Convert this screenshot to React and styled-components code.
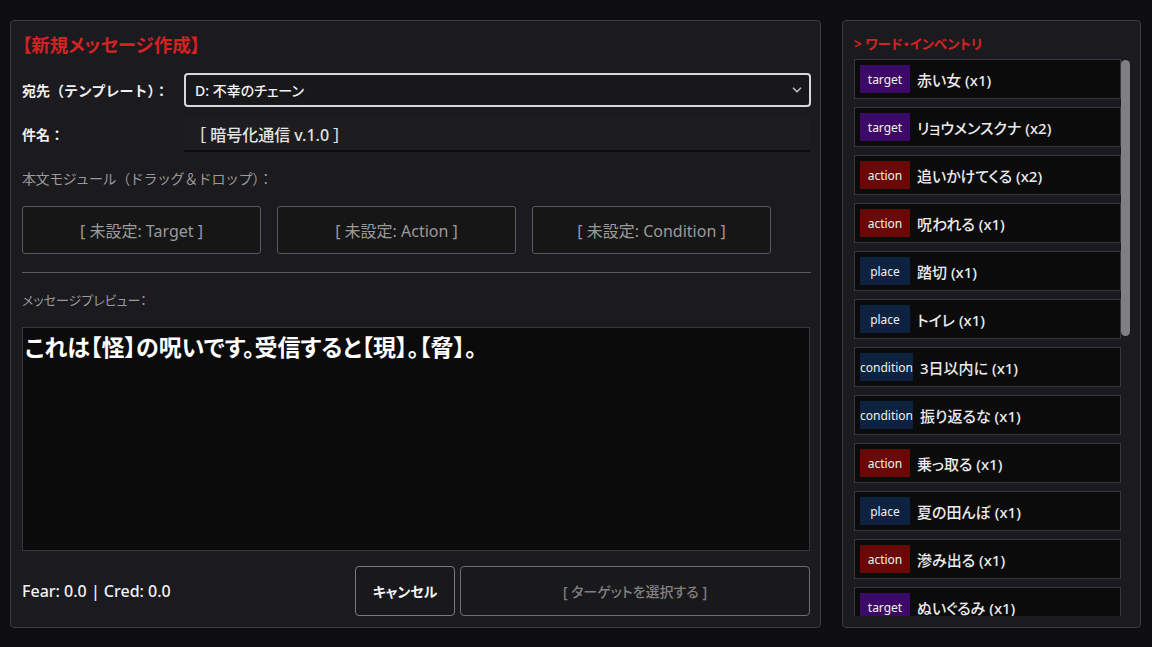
import React from "react";
import styled, { createGlobalStyle } from "styled-components";
import { ChevronDown } from "lucide-react";

const GlobalStyle = createGlobalStyle`
  html, body {
    margin: 0;
    padding: 0;
    background: #0e0e11;
    color: #e6e6e6;
    font-family: "Noto Sans", "Noto Sans CJK JP", sans-serif;
    font-feature-settings: "palt";
  }
  * { box-sizing: border-box; }
`;

const Screen = styled.div`
  display: flex;
  gap: 21px;
  height: 647px;
  padding: 20px 11px 19px 10px;
`;

const Panel = styled.div`
  background: #1b1a1f;
  border: 1px solid #3c3b40;
  border-radius: 4px;
  padding: 11px 9px 11px 11px;
  display: flex;
  flex-direction: column;
  min-width: 0;
`;

const Composer = styled(Panel)`
  flex: 1;
`;

const Inventory = styled(Panel)`
  width: 299px;
  flex-shrink: 0;
  padding-right: 10px;
`;

const Title = styled.h1`
  margin: 0;
  font-size: 18.5px;
  line-height: 26px;
  font-weight: 700;
  color: #d32222;
`;

const FieldRow = styled.div`
  display: flex;
  align-items: center;
  margin-top: ${(p) => p.$mt}px;
`;

const FieldLabel = styled.div`
  width: 162px;
  font-size: 14px;
  font-weight: 700;
  color: #f0f0f0;
  font-feature-settings: normal;
`;

const SelectBox = styled.div`
  flex: 1;
  height: 34px;
  border: 2px solid #d8d8d8;
  border-radius: 4px;
  background: #18181a;
  display: flex;
  align-items: center;
  justify-content: space-between;
  padding: 0 5px 0 9px;
  font-size: 14px;
  font-weight: 500;
  color: #f2f2f2;
`;

const SubjectBox = styled.div`
  flex: 1;
  height: 32px;
  margin-right: 1px;
  background: #1d1d20;
  box-shadow: 0 2px 0 #0c0c0e;
  display: flex;
  align-items: center;
  padding-left: 14px;
  font-size: 16px;
  font-weight: 500;
  color: #e4e4e4;
`;

const SectionLabel = styled.div`
  margin-top: ${(p) => p.$mt}px;
  font-size: ${(p) => p.$size}px;
  letter-spacing: ${(p) => (p.$plain ? "-0.4px" : "0")};
  font-feature-settings: ${(p) => (p.$plain ? "normal" : '"palt"')};
  color: #9a9a9a;
  line-height: 20px;
`;

const Slots = styled.div`
  display: flex;
  gap: 16px;
  margin-top: 17px;
`;

const Slot = styled.div`
  width: 239px;
  height: 48px;
  border: 1px solid #5a5a5e;
  border-radius: 3px;
  background: #161617;
  display: flex;
  align-items: center;
  justify-content: center;
  font-size: 16px;
  color: #9a9a9a;
`;

const Divider = styled.hr`
  border: none;
  border-top: 1px solid #5c5c60;
  margin: 18px 0 0 0;
`;

const Preview = styled.div`
  flex: 1;
  margin-top: 17px;
  margin-right: 1px;
  background: #0b0b0c;
  border: 1px solid #38383c;
  padding: 4px 1px 4px 2px;
  font-size: 23px;
  font-weight: 700;
  color: #ffffff;
  line-height: 30px;
`;

const Footer = styled.div`
  display: flex;
  align-items: center;
  margin-top: 15px;
  gap: 4px;
`;

const Stats = styled.div`
  flex: 1;
  font-size: 16px;
  font-weight: 500;
  color: #f2f2f2;
`;

const Button = styled.button`
  height: 50px;
  width: ${(p) => p.$w}px;
  margin-right: 1px;
  border: 1px solid ${(p) => (p.$muted ? "#6e6e72" : "#7a7a7e")};
  border-radius: 4px;
  background: #19191b;
  color: ${(p) => (p.$muted ? "#808080" : "#f4f4f4")};
  font-family: inherit;
  font-feature-settings: "palt";
  font-size: 14px;
  font-weight: ${(p) => (p.$muted ? 500 : 700)};
`;

const InvTitle = styled.div`
  font-size: 13.5px;
  font-weight: 700;
  color: #d32222;
  line-height: 24px;
`;

const ListArea = styled.div`
  flex: 1;
  min-height: 0;
  position: relative;
  margin-top: 3px;
  padding-right: 9px;
`;

const List = styled.div`
  height: 100%;
  overflow: hidden;
  display: flex;
  flex-direction: column;
  gap: 8px;
`;

const Thumb = styled.div`
  position: absolute;
  top: 1px;
  right: 0;
  width: 9px;
  height: 276px;
  border-radius: 5px;
  background: #808082;
`;

const Item = styled.div`
  flex-shrink: 0;
  height: 40px;
  background: #0b0b0c;
  border: 1px solid #38383c;
  display: flex;
  align-items: center;
  padding-left: 5px;
  gap: 7px;
  font-size: 15px;
  font-weight: 500;
  color: #ececec;
`;

const badgeColors = {
  target: "#3c0a66",
  action: "#6a0808",
  place: "#0c2240",
  condition: "#0c2240",
};

const Badge = styled.span`
  height: 28px;
  min-width: 50px;
  padding: 0;
  background: ${(p) => badgeColors[p.$kind]};
  display: inline-flex;
  align-items: center;
  justify-content: center;
  font-size: 12px;
  font-weight: 400;
  color: #f0f0f0;
`;

const words = [
  ["target", "赤い女 (x1)"],
  ["target", "リョウメンスクナ (x2)"],
  ["action", "追いかけてくる (x2)"],
  ["action", "呪われる (x1)"],
  ["place", "踏切 (x1)"],
  ["place", "トイレ (x1)"],
  ["condition", "3日以内に (x1)"],
  ["condition", "振り返るな (x1)"],
  ["action", "乗っ取る (x1)"],
  ["place", "夏の田んぼ (x1)"],
  ["action", "滲み出る (x1)"],
  ["target", "ぬいぐるみ (x1)"],
  ["place", "廃病院 (x1)"],
];

export default function App() {
  return (
    <>
      <GlobalStyle />
      <Screen>
        <Composer>
          <Title>【新規メッセージ作成】</Title>
          <FieldRow $mt={15}>
            <FieldLabel>宛先（テンプレート）：</FieldLabel>
            <SelectBox>
              <span>D: 不幸のチェーン</span>
              <ChevronDown size={14} strokeWidth={3} color="#b8b8b8" />
            </SelectBox>
          </FieldRow>
          <FieldRow $mt={11}>
            <FieldLabel>件名：</FieldLabel>
            <SubjectBox>［ 暗号化通信 v.1.0 ］</SubjectBox>
          </FieldRow>
          <SectionLabel $mt={19} $size={14} $plain>
            本文モジュール（ドラッグ＆ドロップ）：
          </SectionLabel>
          <Slots>
            <Slot>[ 未設定: Target ]</Slot>
            <Slot>[ 未設定: Action ]</Slot>
            <Slot>[ 未設定: Condition ]</Slot>
          </Slots>
          <Divider />
          <SectionLabel $mt={17} $size={13}>
            メッセージプレビュー：
          </SectionLabel>
          <Preview>これは【怪】の呪いです。受信すると【現】。【脅】。</Preview>
          <Footer>
            <Stats>Fear: 0.0 | Cred: 0.0</Stats>
            <Button $w={100}>キャンセル</Button>
            <Button $w={350} $muted>
              [ ターゲットを選択する ]
            </Button>
          </Footer>
        </Composer>
        <Inventory>
          <InvTitle>&gt; ワード・インベントリ</InvTitle>
          <ListArea>
            <List>
              {words.map(([kind, label], i) => (
                <Item key={i}>
                  <Badge $kind={kind}>{kind}</Badge>
                  {label}
                </Item>
              ))}
            </List>
            <Thumb />
          </ListArea>
        </Inventory>
      </Screen>
    </>
  );
}
